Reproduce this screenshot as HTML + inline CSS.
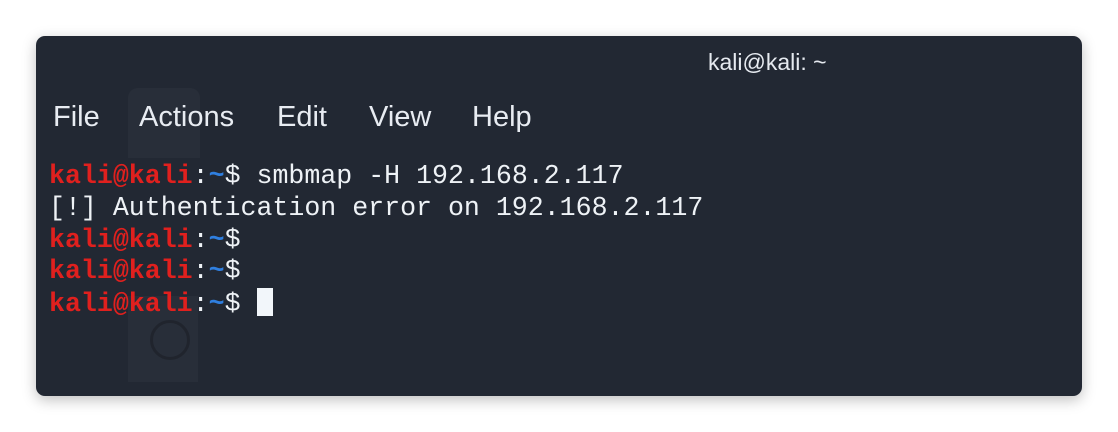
<!DOCTYPE html>
<html><head><meta charset="utf-8"><style>
html,body{margin:0;padding:0;width:1118px;height:432px;background:#fff;overflow:hidden}
.win{position:absolute;left:36px;top:36px;width:1046px;height:360px;background:#222833;border-radius:9px;box-shadow:0 4px 14px rgba(0,0,0,.25);overflow:hidden}
.menu{position:absolute;top:0;left:0;font:29px "Liberation Sans",sans-serif;color:#e8ecf2}
.menu span{position:absolute;top:65px;white-space:nowrap}
.term{position:absolute;left:13px;top:125px;font:26.6px/31.8px "Liberation Mono",monospace;color:#eef2f6;white-space:pre}
.u{color:#e0201e;font-weight:bold}
.b{color:#2f7fe0;font-weight:bold}
.cur{display:inline-block;width:16px;height:28px;background:#f2f6fa;vertical-align:-5px}
.ghost{position:absolute;background:rgba(255,255,255,.03)}
</style></head><body>
<div class="win">
<div class="ghost" style="left:92px;top:52px;width:72px;height:70px;border-radius:10px 10px 0 0"></div>
<div class="ghost" style="left:92px;top:260px;width:70px;height:86px"></div>
<div style="position:absolute;left:114px;top:284px;width:34px;height:34px;border:3px solid rgba(0,0,0,.2);border-radius:50%"></div>
<div style="position:absolute;left:672px;top:13px;font:23px 'Liberation Sans',sans-serif;color:#e6eaf0;white-space:nowrap">kali@kali: ~</div>
<div class="menu"><span style="left:17px">File</span><span style="left:103px">Actions</span><span style="left:241px">Edit</span><span style="left:333px">View</span><span style="left:436px">Help</span></div>
<div class="term"><span class="u">kali@kali</span>:<span class="b">~</span>$ smbmap -H 192.168.2.117
[!] Authentication error on 192.168.2.117
<span class="u">kali@kali</span>:<span class="b">~</span>$
<span class="u">kali@kali</span>:<span class="b">~</span>$
<span class="u">kali@kali</span>:<span class="b">~</span>$ <span class="cur"></span></div>
</div>
</body></html>
